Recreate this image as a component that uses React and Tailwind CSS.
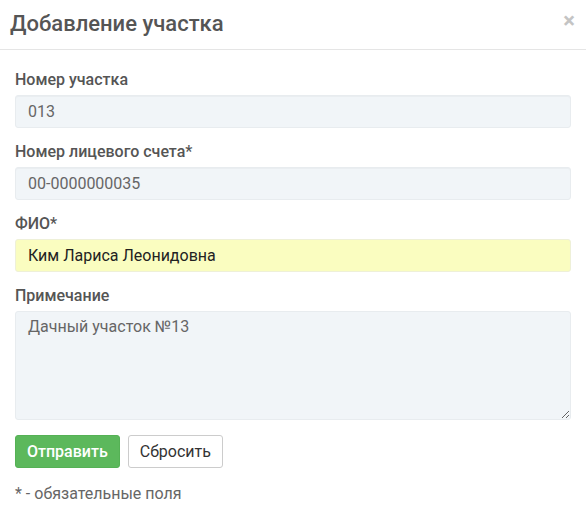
export default function App() {
  const inputCls =
    "block w-full h-[33px] px-3 text-[16px] text-[#666] bg-[#f1f5f8] border border-[#e8ecef] rounded-[3px] shadow-[inset_0_1px_1px_rgba(0,0,0,0.03)] outline-none";
  return (
    <div className="w-[586px] h-[530px] bg-white font-['Roboto',sans-serif] text-[#555]">
      <div className="flex items-center justify-between h-[50px] px-[10px] border-b border-[#e5e5e5]">
        <h1 className="text-[22px] font-medium leading-none text-[#555] -mt-[2px]">Добавление участка</h1>
        <span className="text-[22px] font-bold leading-none text-[#c4c4c4] mr-[1px] -mt-[8px]">×</span>
      </div>
      <form className="px-[15px] pt-[20px]" onSubmit={(e) => e.preventDefault()}>
        <div className="mb-[14px]">
          <label className="block text-[16px] font-medium leading-5 mb-[5px]">Номер участка</label>
          <input className={inputCls} defaultValue="013" />
        </div>
        <div className="mb-[14px]">
          <label className="block text-[16px] font-medium leading-5 mb-[5px]">Номер лицевого счета*</label>
          <input className={inputCls} defaultValue="00-0000000035" />
        </div>
        <div className="mb-[14px]">
          <label className="block text-[16px] font-medium leading-5 mb-[5px]">ФИО*</label>
          <input
            className="block w-full h-[33px] px-3 text-[16px] text-[#222] bg-[#fafdc0] border border-[#eef0d8] rounded-[3px] outline-none"
            defaultValue="Ким Лариса Леонидовна"
          />
        </div>
        <div className="mb-[15px]">
          <label className="block text-[16px] font-medium leading-5 mb-[5px]">Примечание</label>
          <textarea
            className="block w-full h-[109px] px-3 py-[5px] text-[16px] leading-5 text-[#666] bg-[#f1f5f8] border border-[#e8ecef] rounded-[3px] outline-none"
            defaultValue="Дачный участок №13"
          />
        </div>
        <div className="flex gap-[8px]">
          <button
            type="submit"
            className="h-[33px] px-[11px] text-[16px] font-medium text-white bg-[#5cb85c] border border-[#55b155] rounded-[3px]"
          >
            Отправить
          </button>
          <button
            type="reset"
            className="h-[33px] px-[11px] text-[16px] text-[#333] bg-white border border-[#ccc] rounded-[3px]"
          >
            Сбросить
          </button>
        </div>
        <p className="mt-[16px] text-[16px] leading-5 text-[#666]">* - обязательные поля</p>
      </form>
    </div>
  );
}
